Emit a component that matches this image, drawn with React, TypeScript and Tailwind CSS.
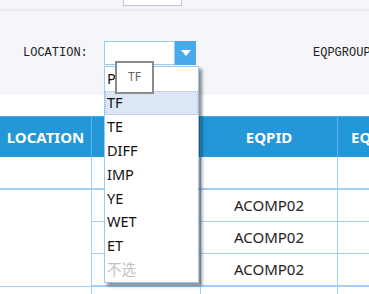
import React from "react";

const items = ["P", "TF", "TE", "DIFF", "IMP", "YE", "WET", "ET"];

export default function App() {
  const sans = { fontFamily: "'Noto Sans', 'Noto Sans CJK SC', sans-serif" };
  return (
    <div className="relative w-[369px] h-[294px] overflow-hidden bg-white">
      {/* top strip */}
      <div className="h-[9px] bg-[#f5f6f9]">
        <div className="ml-[123px] w-[59px] h-[6px] bg-white border border-t-0 border-[#c3c3d2]" />
      </div>
      <div className="h-[2px] bg-[#e9ebf0]" />
      {/* toolbar */}
      <div
        className="h-[84px] bg-[#f5f6f9] flex items-start pt-[30px] text-[12px] text-[#222] overflow-hidden"
        style={{ fontFamily: "'Liberation Mono', monospace" }}
      >
        <div className="ml-[23px] w-[81px] shrink-0 leading-[24px]">LOCATION:</div>
        <div className="flex h-[24px] shrink-0">
          <div className="w-[71px] h-[24px] bg-white border border-[#9cc9ef]" />
          <div className="w-[21px] h-[24px] bg-[#4aa9ea] flex items-center justify-center">
            <svg width="10" height="6" viewBox="0 0 10 6">
              <path d="M0 0 L10 0 L5 6 Z" fill="#fff" />
            </svg>
          </div>
        </div>
        <div className="ml-[117px] shrink-0 leading-[24px] whitespace-nowrap">EQPGROUP</div>
      </div>
      <div className="h-[21px] bg-white" />
      {/* table */}
      <div style={sans}>
        <div className="grid grid-cols-[92px_109px_137px_1fr] h-[41px] bg-[#2397d8] text-white font-bold text-[15px] border-t border-[#4aaae6]">
          <div className="border-r border-[#5db5ec] flex items-center justify-center">LOCATION</div>
          <div className="border-r border-[#5db5ec]" />
          <div className="border-r border-[#5db5ec] flex items-center justify-center">EQPID</div>
          <div className="flex items-center pl-[13px] whitespace-nowrap overflow-hidden">EQPGROUP</div>
        </div>
        <div className="grid grid-cols-[92px_109px_137px_1fr] h-[33px] border-b-2 border-[#a4cff5]">
          <div className="border-r border-[#a4cff5]" />
          <div className="border-r border-[#a4cff5]" />
          <div className="border-r border-[#a4cff5]" />
          <div />
        </div>
        <div className="grid grid-cols-[92px_109px_137px_1fr] grid-rows-[32px_32px_32px] border-b border-[#a4cff5] text-[15px] text-[#222]">
          <div className="row-span-3 border-r border-[#a4cff5]" />
          {[0, 1, 2].map((i) => (
            <React.Fragment key={i}>
              <div className="border-r border-b border-[#a4cff5]" />
              <div className="border-r border-b border-[#a4cff5] flex items-center justify-center">ACOMP02</div>
              <div className="border-b border-[#a4cff5]" />
            </React.Fragment>
          ))}
        </div>
        <div className="grid grid-cols-[92px_109px_137px_1fr] h-[20px]">
          <div className="border-r border-[#a4cff5]" />
          <div className="border-r border-[#a4cff5]" />
          <div className="border-r border-[#a4cff5]" />
          <div />
        </div>
      </div>
      {/* dropdown list */}
      <div
        className="absolute left-[104px] top-[66px] w-[95px] h-[217px] bg-white border border-[#9cc9ef] shadow-[3px_3px_3px_rgba(0,0,0,0.45)] flex flex-col text-[14.5px] text-[#111]"
        style={sans}
      >
        {items.map((t) => (
          <div
            key={t}
            className={
              "h-[24px] flex items-center " +
              (t === "TF" ? "bg-[#dde6f6] border border-dotted border-[#a9bce3] pl-[1px]" : "pl-[2px]")
            }
          >
            {t}
          </div>
        ))}
        <div className="h-[24px] pl-[2px] flex items-center text-[#c2c2c2]">不选</div>
      </div>
      {/* tooltip */}
      <div
        className="absolute left-[115px] top-[61px] w-[39px] h-[33px] bg-white border-2 border-[#8a8a8a] flex justify-center pt-[5px] text-[12px] text-[#666]"
        style={sans}
      >
        TF
      </div>
    </div>
  );
}
